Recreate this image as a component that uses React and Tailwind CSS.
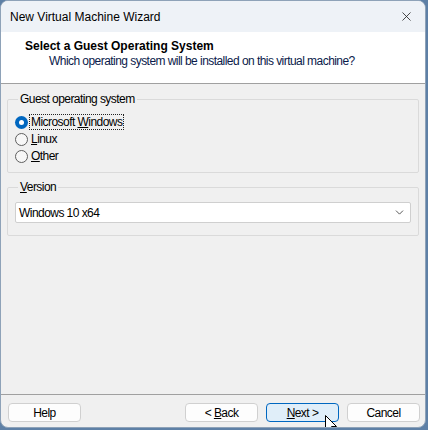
import { X, ChevronDown } from "lucide-react";

const font = { fontFamily: '"Liberation Sans", Arial, sans-serif' };

const Radio = ({ checked, children, focused }) => (
  <label className="flex h-[16px] items-center gap-[2px]">
    {checked ? (
      <span className="flex h-[13px] w-[13px] items-center justify-center rounded-full bg-[#0067c0]">
        <span className="h-[5px] w-[5px] rounded-full bg-white" />
      </span>
    ) : (
      <span className="h-[13px] w-[13px] rounded-full border border-[#5f5f5f] bg-[#f7f7f7]" />
    )}
    <span className={`px-[1px] leading-[14px] ${focused ? "outline outline-1 outline-dotted outline-[#222]" : ""}`}>
      {children}
    </span>
  </label>
);

const Button = ({ children, primary }) => (
  <button
    type="button"
    className={`h-[19px] w-[73px] rounded-[4px] border text-[12px] leading-none tracking-[-0.55px] text-black ${
      primary ? "border-[#0067c0] bg-[#e0eef9]" : "border-[#d0d0d0] bg-[#fdfdfd]"
    }`}
  >
    {children}
  </button>
);

export default function App() {
  return (
    <div className="h-[430px] w-[428px] bg-[#5e80a6]" style={font}>
      <div className="relative flex h-[428px] w-[426px] flex-col overflow-hidden rounded-[8px] border border-[#8ea2b8] bg-[#f0f0f0] text-[12px] text-black">
        <div className="flex h-[31px] shrink-0 items-center justify-between bg-[#eef2f7] pl-[9px] pr-[11px]">
          <span>New Virtual Machine Wizard</span>
          <X size={15} strokeWidth={1.3} className="text-[#222]" />
        </div>

        <div className="h-[52px] shrink-0 border-b border-[#a0a0a0] bg-white pl-[24px] pt-[7px]">
          <div className="font-bold leading-[15px]">Select a Guest Operating System</div>
          <div className="pl-[24px] leading-[15px] tracking-[-0.55px] text-[#0a1a4a]">
            Which operating system will be installed on this virtual machine?
          </div>
        </div>

        <div className="flex flex-1 flex-col px-[6px] pt-[8px] tracking-[-0.55px]">
          <fieldset className="h-[81px] rounded-[2px] border border-[#dadada] pl-[7px]">
            <legend className="ml-[3px] px-[2px] leading-[14px]">Guest operating system</legend>
            <div className="mt-[8px] flex flex-col gap-[1px]">
              <Radio checked focused>
                Microsoft <span className="underline">W</span>indows
              </Radio>
              <Radio>
                <span className="underline">L</span>inux
              </Radio>
              <Radio>
                <span className="underline">O</span>ther
              </Radio>
            </div>
          </fieldset>

          <fieldset className="mt-[7px] h-[56px] rounded-[2px] border border-[#dadada] px-[7px]">
            <legend className="ml-[3px] px-[2px] leading-[14px]">
              <span className="underline">V</span>ersion
            </legend>
            <div className="mt-[8px] flex h-[21px] items-center justify-between rounded-[2px] border border-[#cfcfcf] bg-white pl-[3px] pr-[4px]">
              <span>Windows 10 x64</span>
              <ChevronDown size={13} strokeWidth={1.5} className="text-[#333]" />
            </div>
          </fieldset>
        </div>

        <div className="flex h-[33px] shrink-0 items-start border-t border-[#a0a0a0] pl-[7px] pr-[5px] pt-[8px]">
          <Button>Help</Button>
          <div className="ml-auto flex gap-[8px]">
            <Button>
              &lt; <span className="underline">B</span>ack
            </Button>
            <Button primary>
              <span className="underline">N</span>ext &gt;
            </Button>
            <Button>Cancel</Button>
          </div>
        </div>

        <svg
          className="absolute left-[324px] top-[414px]"
          width="13"
          height="20"
          viewBox="0 0 13 20"
        >
          <path d="M0.5 0.5 L0.5 16 L4 12.5 L6.5 18.5 L9 17.5 L6.5 11.5 L11.5 11.5 Z" fill="white" stroke="black" strokeWidth="1" />
        </svg>
      </div>
    </div>
  );
}
